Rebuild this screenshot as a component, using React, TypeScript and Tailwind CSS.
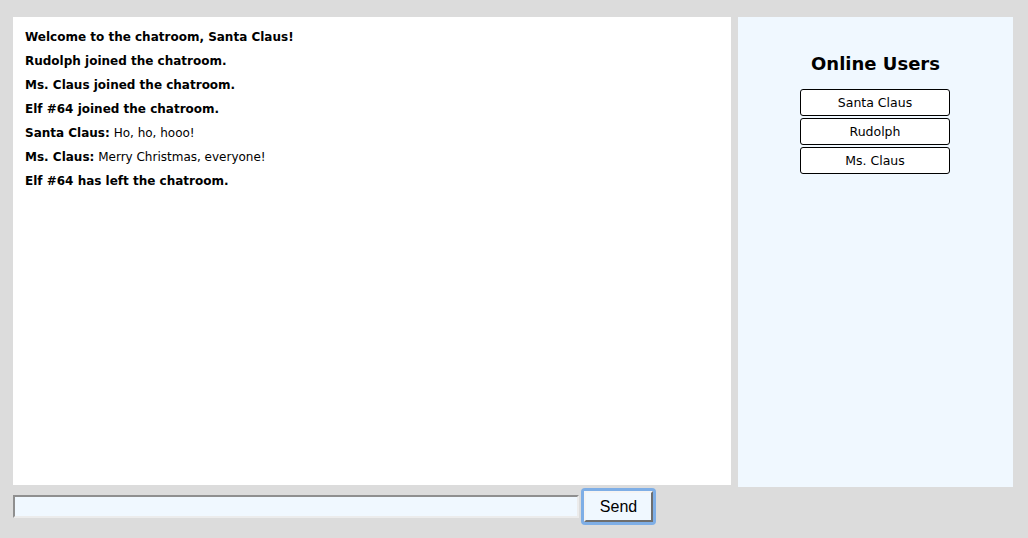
import { useState } from 'react';

type Msg = { who?: string; text: string };

const messages: Msg[] = [
  { text: 'Welcome to the chatroom, Santa Claus!' },
  { text: 'Rudolph joined the chatroom.' },
  { text: 'Ms. Claus joined the chatroom.' },
  { text: 'Elf #64 joined the chatroom.' },
  { who: 'Santa Claus', text: 'Ho, ho, hooo!' },
  { who: 'Ms. Claus', text: 'Merry Christmas, everyone!' },
  { text: 'Elf #64 has left the chatroom.' },
];

const users = ['Santa Claus', 'Rudolph', 'Ms. Claus'];

const App = () => {
  const [draft, setDraft] = useState('');

  return (
    <div
      className="w-[1028px] h-[538px] bg-[#dcdcdc] text-black overflow-hidden"
      style={{ fontFamily: 'Verdana, "DejaVu Sans", sans-serif' }}
    >
      <div className="flex gap-[7px] pl-[13px] pt-[17px]">
        {/* Chat log */}
        <div className="flex flex-col">
          <div className="w-[718px] h-[468px] bg-white px-[12px] pt-[8px] text-[12px]">
            {messages.map((m, i) => (
              <div key={i} className="leading-[24px] whitespace-nowrap">
                {m.who ? (
                  <>
                    <b>{m.who}:</b> {m.text}
                  </>
                ) : (
                  <b>{m.text}</b>
                )}
              </div>
            ))}
          </div>

          {/* Compose bar */}
          <div className="flex items-center mt-[3px]">
            <input
              value={draft}
              onChange={(e) => setDraft(e.target.value)}
              className="w-[566px] h-[23px] bg-[#f0f8ff] border-2 border-t-[#8f8f8f] border-l-[#8f8f8f] border-b-[#ececec] border-r-[#ececec] outline-none text-[13px] px-1"
            />
            <div className="ml-[2px] p-[3px] rounded-[4px] bg-[#7eaee6]">
              <button
                className="w-[69px] h-[31px] bg-[#f0f8ff] border-2 border-t-[#f4f4f4] border-l-[#f4f4f4] border-b-[#6e6e6e] border-r-[#6e6e6e] text-[16px] text-black"
                style={{ fontFamily: '"Liberation Sans", Arial, sans-serif' }}
              >
                Send
              </button>
            </div>
          </div>
        </div>

        {/* Online users */}
        <div className="w-[275px] h-[470px] bg-[#f0f8ff] flex flex-col items-center pt-[35px]">
          <h2 className="text-[18px] font-bold leading-[24px]">Online Users</h2>
          <div className="mt-[13px] mr-[1px] flex flex-col gap-[2px]">
            {users.map((u) => (
              <div
                key={u}
                className="w-[150px] h-[27px] bg-white border border-black rounded-[3px] flex items-center justify-center text-[12.5px] pt-[1px]"
              >
                {u}
              </div>
            ))}
          </div>
        </div>
      </div>
    </div>
  );
};

export default App;
